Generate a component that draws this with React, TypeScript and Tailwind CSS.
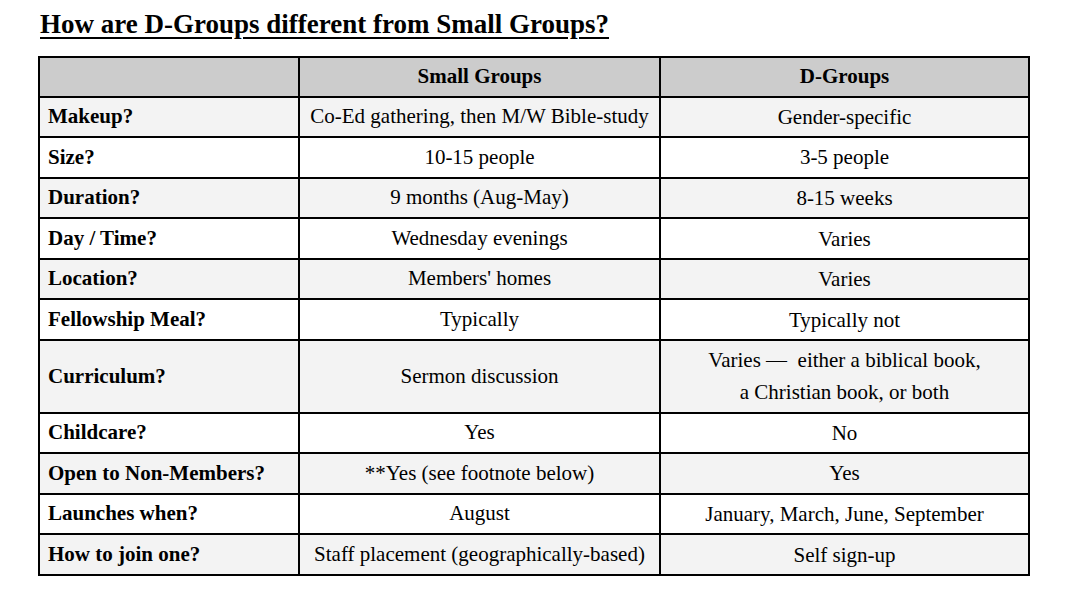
const rows: { label: string; small: string; d: React.ReactNode; tall?: boolean }[] = [
  { label: 'Makeup?', small: 'Co-Ed gathering, then M/W Bible-study', d: 'Gender-specific' },
  { label: 'Size?', small: '10-15 people', d: '3-5 people' },
  { label: 'Duration?', small: '9 months (Aug-May)', d: '8-15 weeks' },
  { label: 'Day / Time?', small: 'Wednesday evenings', d: 'Varies' },
  { label: 'Location?', small: "Members' homes", d: 'Varies' },
  { label: 'Fellowship Meal?', small: 'Typically', d: 'Typically not' },
  {
    label: 'Curriculum?',
    small: 'Sermon discussion',
    d: (
      <>
        Varies —&nbsp; either a biblical book,
        <br />
        a Christian book, or both
      </>
    ),
    tall: true,
  },
  { label: 'Childcare?', small: 'Yes', d: 'No' },
  { label: 'Open to Non-Members?', small: '**Yes (see footnote below)', d: 'Yes' },
  { label: 'Launches when?', small: 'August', d: 'January, March, June, September' },
  { label: 'How to join one?', small: 'Staff placement (geographically-based)', d: 'Self sign-up' },
];

export default function App() {
  return (
    <div className="w-[1072px] h-[592px] bg-white text-black font-['Liberation_Serif',serif] pt-[7px] pl-[38px]">
      <h1 className="ml-[2px] text-[27px] font-bold underline underline-offset-[4px] decoration-[2px] leading-[34px]">
        How are D-Groups different from Small Groups?
      </h1>
      <table className="mt-[15px] w-[990px] border-collapse border-2 border-black text-[21px] table-fixed">
        <colgroup>
          <col className="w-[260px]" />
          <col className="w-[361px]" />
          <col className="w-[369px]" />
        </colgroup>
        <thead>
          <tr className="h-[39.5px] bg-[#cccccc]">
            <th className="border-2 border-black" />
            <th className="border-2 border-black font-bold text-center">Small Groups</th>
            <th className="border-2 border-black font-bold text-center">D-Groups</th>
          </tr>
        </thead>
        <tbody>
          {rows.map((r, i) => (
            <tr
              key={r.label}
              className={`${r.tall ? 'h-[72.5px]' : 'h-[40.6px]'} ${i % 2 === 0 ? 'bg-[#f3f3f3]' : 'bg-white'}`}
            >
              <td className="border-2 border-black pl-[8px] font-bold text-left whitespace-nowrap">{r.label}</td>
              <td className="border-2 border-black text-center whitespace-nowrap">{r.small}</td>
              <td className="border-2 border-black text-center leading-[32px] whitespace-nowrap">{r.d}</td>
            </tr>
          ))}
        </tbody>
      </table>
    </div>
  );
}
